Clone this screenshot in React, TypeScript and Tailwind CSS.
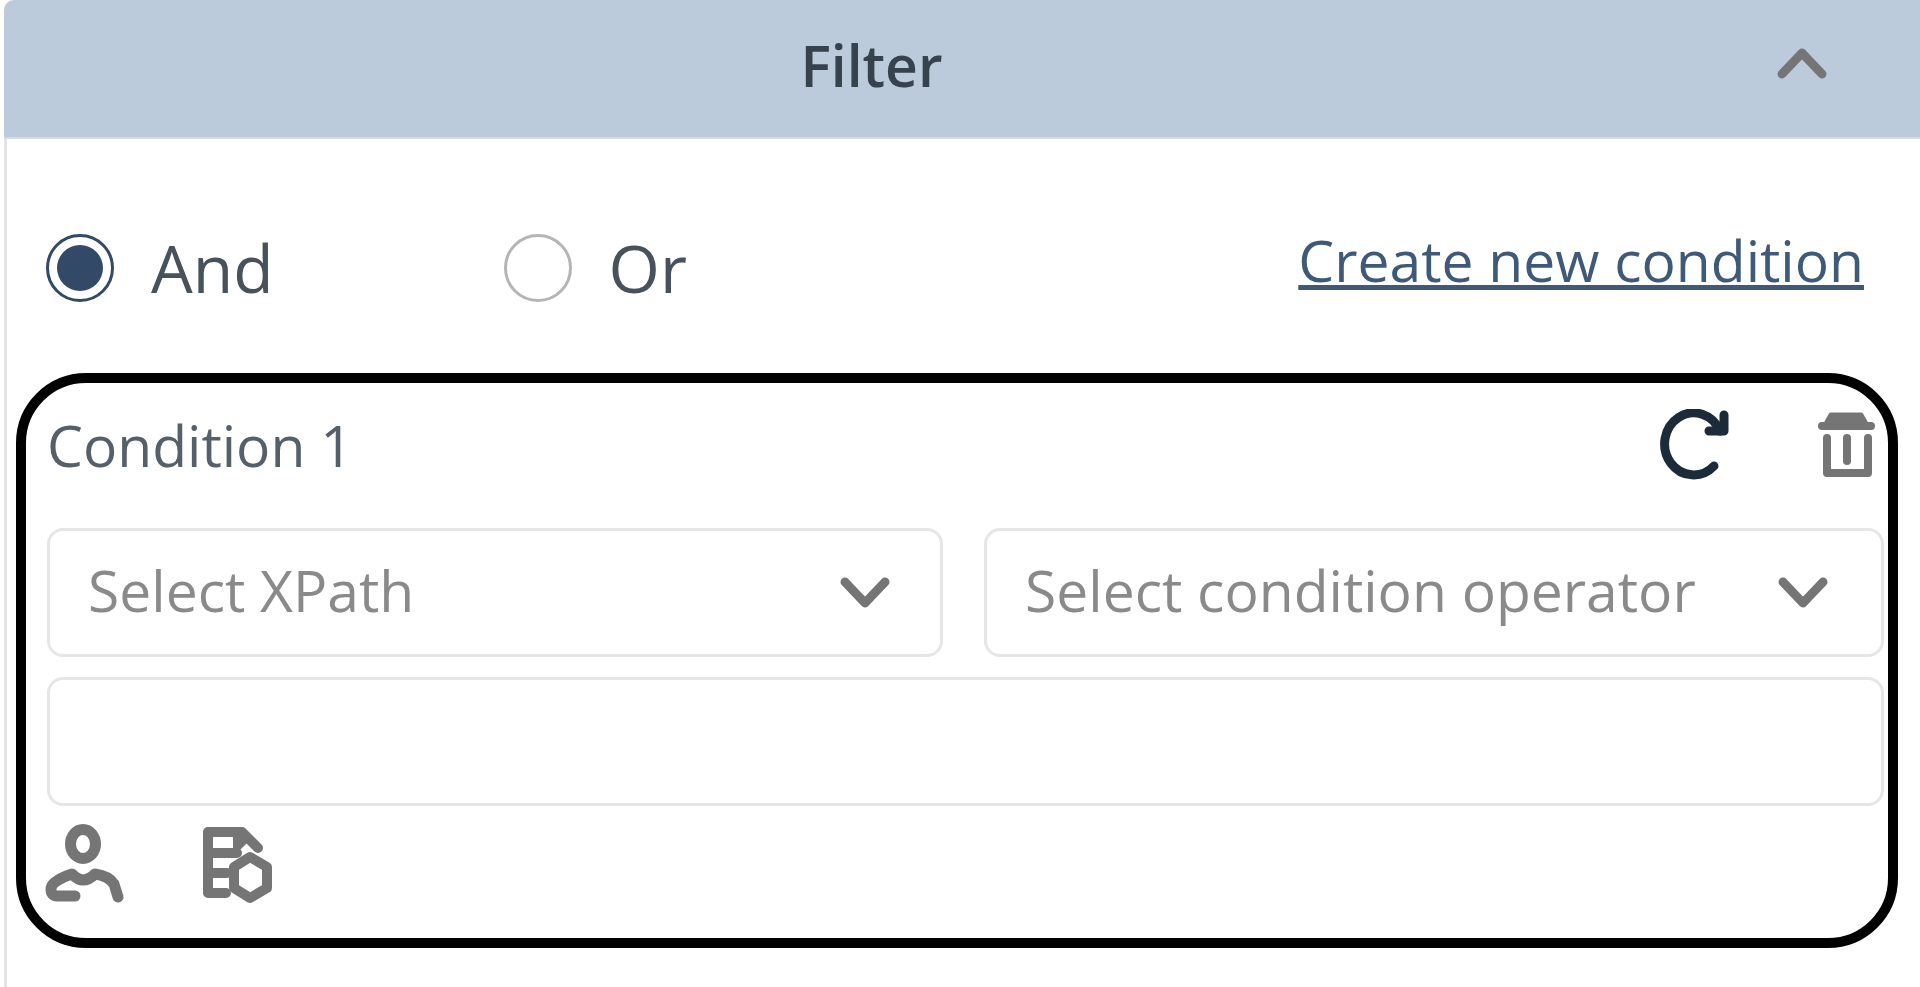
import React from "react";

const font = { fontFamily: '"Open Sans", sans-serif' };

const Chevron = ({ up = false, className = "" }: { up?: boolean; className?: string }) => (
  <svg viewBox="0 0 50 34" className={className} fill="none" stroke="#757575" strokeWidth="9" strokeLinecap="round" strokeLinejoin="round">
    {up ? <path d="M5 28 L25 7 L45 28" /> : <path d="M5 6 L25 27 L45 6" />}
  </svg>
);

const Select = ({ label, className = "" }: { label: string; className?: string }) => (
  <div className={`h-[129px] flex items-center justify-between border-[3px] border-[#e6e6e6] rounded-[16px] pl-[38px] text-[57px] text-[#8a8a8a] ${className}`}>
    <span className="-mt-[4px]">{label}</span>
    <Chevron className="w-[50px] h-[34px]" />
  </div>
);

const Radio = ({ checked, label, className = "" }: { checked?: boolean; label: string; className?: string }) => (
  <label className={`flex items-center ${className}`}>
    <span className={`w-[68px] h-[68px] rounded-full border-[3px] flex items-center justify-center ${checked ? "border-[#324a68]" : "border-[#b5b5b5]"}`}>
      {checked && <span className="w-[46px] h-[46px] rounded-full bg-[#324a68]" />}
    </span>
    <span className="ml-[37px] text-[66px] text-[#47525c] -mt-[2px]">{label}</span>
  </label>
);

export default function App() {
  return (
    <div className="w-full h-[987px] bg-white pl-1 overflow-hidden blur-[0.7px]" style={font}>
      <div className="h-full border-l-[3px] border-[#e4e4e4] rounded-tl-[10px]">
        <div className="-ml-[3px] h-[139px] bg-[#bccbdc] rounded-tl-[10px] flex items-center border-b-[2px] border-[#d5dbe2]">
          <span className="flex-1 text-center text-[57px] font-[550] text-[#36424d] leading-none pb-[6px]">Filter</span>
          <Chevron up className="w-[50px] h-[34px] ml-[38px] mr-[93px] -mt-[12px]" />
        </div>

        <div className="h-[234px] flex items-center justify-between pl-[39px] pr-[56px] pt-[24px]">
          <div className="flex items-center">
            <Radio checked label="And" />
            <Radio label="Or" className="ml-[230px]" />
          </div>
          <a className="text-[57px] text-[#3f5a78] underline -mt-[14px]">Create new condition</a>
        </div>

        <div className="ml-[9px] mr-[22px] h-[575px] border-[10px] border-black rounded-[70px] pl-[21px] pr-[4px]">
          <div className="h-[145px] flex justify-between">
            <span className="text-[57px] text-[#55606a] mt-[25px] leading-[74px]">Condition 1</span>
            <div className="flex gap-[86px] mt-[26px] mr-[8px]">
              <svg viewBox="0 0 76 76" className="w-[76px] h-[76px]" fill="none" stroke="#1c2b39" strokeWidth="9" strokeLinecap="round" strokeLinejoin="round">
                <path d="M60 57 A29 31 0 1 1 66 22" />
                <path d="M70 6 L70 22 L55 22" />
              </svg>
              <svg viewBox="0 0 60 70" className="w-[60px] h-[70px]" fill="none" stroke="#757575" strokeWidth="8" strokeLinecap="round" strokeLinejoin="round">
                <path d="M15 6 H45 L49 13 H11 Z" fill="#757575" strokeWidth="5" />
                <path d="M6 17 H55" />
                <path d="M11 29 V64 H52 V29" />
                <path d="M31 29 V52" />
              </svg>
            </div>
          </div>
          <div className="grid grid-cols-[896px_1fr] gap-x-[41px]">
            <Select label="Select XPath" className="pr-[50px]" />
            <Select label="Select condition operator" className="pr-[53px]" />
          </div>
          <div className="h-[129px] mt-[20px] border-[3px] border-[#e6e6e6] rounded-[16px]" />
          <div className="flex mt-[18px] -ml-[2px] gap-[75px]">
            <svg viewBox="0 0 80 80" className="w-[80px] h-[80px]" fill="none" stroke="#757575" strokeWidth="11" strokeLinecap="round" strokeLinejoin="round">
              <ellipse cx="38" cy="20" rx="12.5" ry="14.5" />
              <path d="M30 72 H12 Q6 72 6 65 Q6 57 27 50 Q33 56 38 56 Q44 56 50 50 Q64 52 69 60 L73 73" />
            </svg>
            <svg viewBox="0 0 80 80" className="w-[80px] h-[80px]" fill="none" stroke="#757575" strokeWidth="10" strokeLinecap="round" strokeLinejoin="round">
              <path d="M26 69 H8 V8 H42 L58 24" />
              <path d="M8 29 H37 M8 49 H27" />
              <path d="M33 8 H42 L50 16 L37 29 H33 Z" fill="#757575" stroke="none" />
              <path d="M50 33 L67 43 V64 L50 74 L34 64 V43 Z" />
            </svg>
          </div>
        </div>
      </div>
    </div>
  );
}
